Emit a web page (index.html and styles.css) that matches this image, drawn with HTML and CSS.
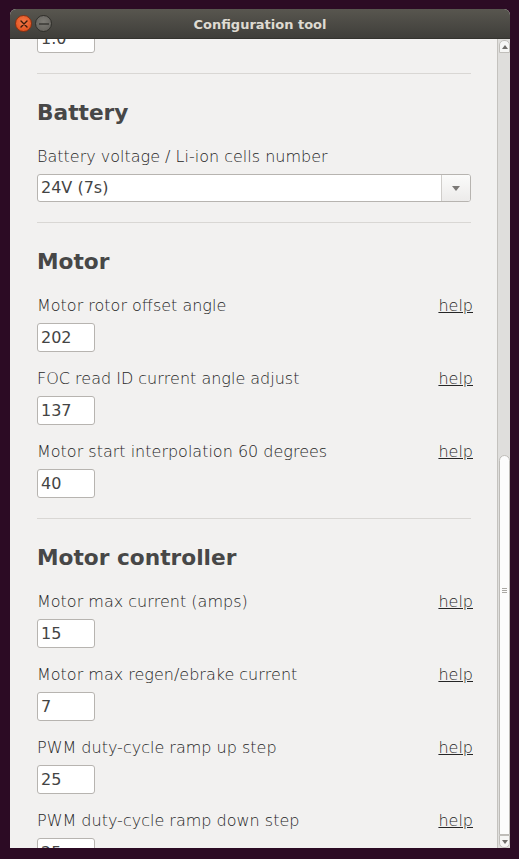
FILE: index.html
```html
<!DOCTYPE html>
<html>
<head>
<meta charset="utf-8">
<link rel="stylesheet" href="styles.css">
<title>Configuration tool</title>
</head>
<body>
<div class="window">
  <div class="titlebar">
    <div class="controls">
      <span class="btn close"><svg width="8" height="8" viewBox="0 0 8 8"><path d="M1 1L7 7M7 1L1 7" stroke="#3a1a0a" stroke-width="1.4" stroke-linecap="round"/></svg></span>
      <span class="btn minimize"><svg width="10" height="2" viewBox="0 0 10 2"><path d="M0 1H10" stroke="#3a3935" stroke-width="1.4"/></svg></span>
    </div>
    <div class="title">Configuration tool</div>
  </div>
  <div class="body">
    <div class="main">
      <div class="content">
        <div class="entry first">1.0</div>
        <div class="sep sep-top"></div>

        <h2 class="heading">Battery</h2>
        <div class="field">
          <div class="label-row"><span class="label">Battery voltage / Li-ion cells number</span></div>
          <div class="select">
            <span class="select-text">24V (7s)</span>
            <span class="select-btn"><span class="arrow"></span></span>
          </div>
        </div>
        <div class="sep sep-after-select"></div>

        <h2 class="heading">Motor</h2>
        <div class="field">
          <div class="label-row"><span class="label">Motor rotor offset angle</span><a class="help">help</a></div>
          <div class="entry">202</div>
        </div>
        <div class="field">
          <div class="label-row"><span class="label">FOC read ID current angle adjust</span><a class="help">help</a></div>
          <div class="entry">137</div>
        </div>
        <div class="field">
          <div class="label-row"><span class="label">Motor start interpolation 60 degrees</span><a class="help">help</a></div>
          <div class="entry">40</div>
        </div>
        <div class="sep sep-after-field"></div>

        <h2 class="heading">Motor controller</h2>
        <div class="field">
          <div class="label-row"><span class="label">Motor max current (amps)</span><a class="help">help</a></div>
          <div class="entry">15</div>
        </div>
        <div class="field">
          <div class="label-row"><span class="label">Motor max regen/ebrake current</span><a class="help">help</a></div>
          <div class="entry">7</div>
        </div>
        <div class="field">
          <div class="label-row"><span class="label">PWM duty-cycle ramp up step</span><a class="help">help</a></div>
          <div class="entry">25</div>
        </div>
        <div class="field">
          <div class="label-row"><span class="label">PWM duty-cycle ramp down step</span><a class="help">help</a></div>
          <div class="entry">25</div>
        </div>
      </div>
    </div>
    <div class="scrollbar">
      <div class="stepper up"><span class="sarrow up"></span></div>
      <div class="trough">
        <div class="trough-space"></div>
        <div class="thumb"><span class="grip"></span></div>
      </div>
      <div class="stepper down"><span class="sarrow down"></span></div>
    </div>
  </div>
</div>
</body>
</html>
```

FILE: styles.css
```css
html, body {
  margin: 0;
  padding: 0;
}
body {
  background: #2c0b24;
  width: 519px;
  height: 859px;
  overflow: hidden;
  font-family: "DejaVu Sans", sans-serif;
}
.window {
  margin: 9px 0 0 10px;
  width: 500px;
  height: 839px;
  display: flex;
  flex-direction: column;
  border-radius: 6px 6px 0 0;
  overflow: hidden;
  background: #f2f1f0;
}
.titlebar {
  height: 30px;
  flex: none;
  display: flex;
  align-items: center;
  position: relative;
  background: linear-gradient(#58564f, #3f3e3a);
  border-bottom: 1px solid #34332f;
  box-sizing: border-box;
}
.controls {
  display: flex;
  gap: 3px;
  padding-left: 5px;
}
.btn {
  width: 17px;
  height: 17px;
  border-radius: 50%;
  display: flex;
  align-items: center;
  justify-content: center;
  box-sizing: border-box;
}
.btn.close {
  background: radial-gradient(circle at 50% 40%, #f47a4a, #dd4814);
  border: 1px solid #8c3010;
}
.btn.minimize {
  background: radial-gradient(circle at 50% 40%, #7d7b75, #5f5d58);
  border: 1px solid #302f2b;
}
.title {
  position: absolute;
  left: 0;
  right: 0;
  top: 7px;
  text-align: center;
  color: #dfdbd2;
  font-weight: bold;
  font-size: 13px;
  line-height: 17px;
  pointer-events: none;
}
.body {
  flex: 1;
  display: flex;
  min-height: 0;
}
.main {
  flex: 1;
  overflow: hidden;
  padding: 0 26px 0 27px;
}
.content {
  color: #4c4c4c;
}
.entry {
  width: 58px;
  height: 29px;
  box-sizing: border-box;
  border: 1px solid #b7b4b0;
  border-radius: 3px;
  background: #fff;
  font-size: 16px;
  line-height: 27px;
  padding-left: 3px;
  color: #444;
  overflow: hidden;
}
.entry.first {
  margin-top: -15px;
}
.sep {
  height: 1px;
  background: #d9d7d4;
  margin-top: 20px;
}
.sep-top { margin-top: 20px; }
.sep-after-select { margin-top: 20px; }
.sep-after-field { margin-top: 20px; }
.heading {
  margin: 26px 0 0 0;
  font-size: 21.7px;
  line-height: 26px;
  font-weight: bold;
  color: #474747;
}
.field {
  margin-top: 21px;
}
.field + .field {
  margin-top: 17px;
}
.label-row {
  display: flex;
  justify-content: space-between;
  align-items: baseline;
  height: 20px;
  margin-bottom: 7px;
}
.label {
  font-size: 16px;
  line-height: 20px;
  font-weight: 200;
  color: #262626;
}
.help {
  font-size: 16px;
  line-height: 20px;
  font-weight: 200;
  color: #262626;
  text-decoration: underline;
  margin-right: -2px;
}
.select {
  height: 28px;
  box-sizing: border-box;
  border: 1px solid #b7b4b0;
  border-radius: 3px;
  background: #fff;
  display: flex;
  overflow: hidden;
}
.select-text {
  flex: 1;
  font-size: 16px;
  line-height: 26px;
  padding-left: 3px;
  color: #444;
}
.select-btn {
  width: 28px;
  border-left: 1px solid #cfcdca;
  background: linear-gradient(#fbfbfa, #ecebea);
  display: flex;
  align-items: center;
  justify-content: center;
}
.arrow {
  width: 0;
  height: 0;
  border-left: 4px solid transparent;
  border-right: 4px solid transparent;
  border-top: 5px solid #7b7976;
}
.scrollbar {
  width: 13px;
  flex: none;
  display: flex;
  flex-direction: column;
  background: #dfdedc;
  border-left: 1px solid #c4c2be;
  box-sizing: border-box;
  padding: 1px 0 0 1px;
}
.stepper {
  height: 13px;
  flex: none;
  display: flex;
  align-items: center;
  justify-content: center;
  background: #f6f6f5;
  border: 1px solid #c0beba;
  box-sizing: border-box;
}
.stepper.up { border-radius: 5px 5px 0 0; }
.stepper.down { border-radius: 0 0 5px 5px; }
.sarrow {
  width: 0;
  height: 0;
  border-left: 3px solid transparent;
  border-right: 3px solid transparent;
}
.sarrow.up { border-bottom: 4px solid #6f6d6a; }
.sarrow.down { border-top: 4px solid #6f6d6a; }
.trough {
  flex: 1;
  display: flex;
  flex-direction: column;
}
.trough-space { height: 402px; flex: none; }
.thumb {
  flex: 1;
  background: #fcfcfc;
  border: 1px solid #bebcb8;
  border-radius: 6px 6px 0 0;
  box-sizing: border-box;
  display: flex;
  align-items: center;
  justify-content: center;
  padding-bottom: 110px;
}
.grip {
  width: 5px;
  height: 5px;
  border-top: 1px solid #a9a7a3;
  border-bottom: 1px solid #a9a7a3;
  background: linear-gradient(#a9a7a3, #a9a7a3) center / 5px 1px no-repeat;
  box-sizing: border-box;
}
```
